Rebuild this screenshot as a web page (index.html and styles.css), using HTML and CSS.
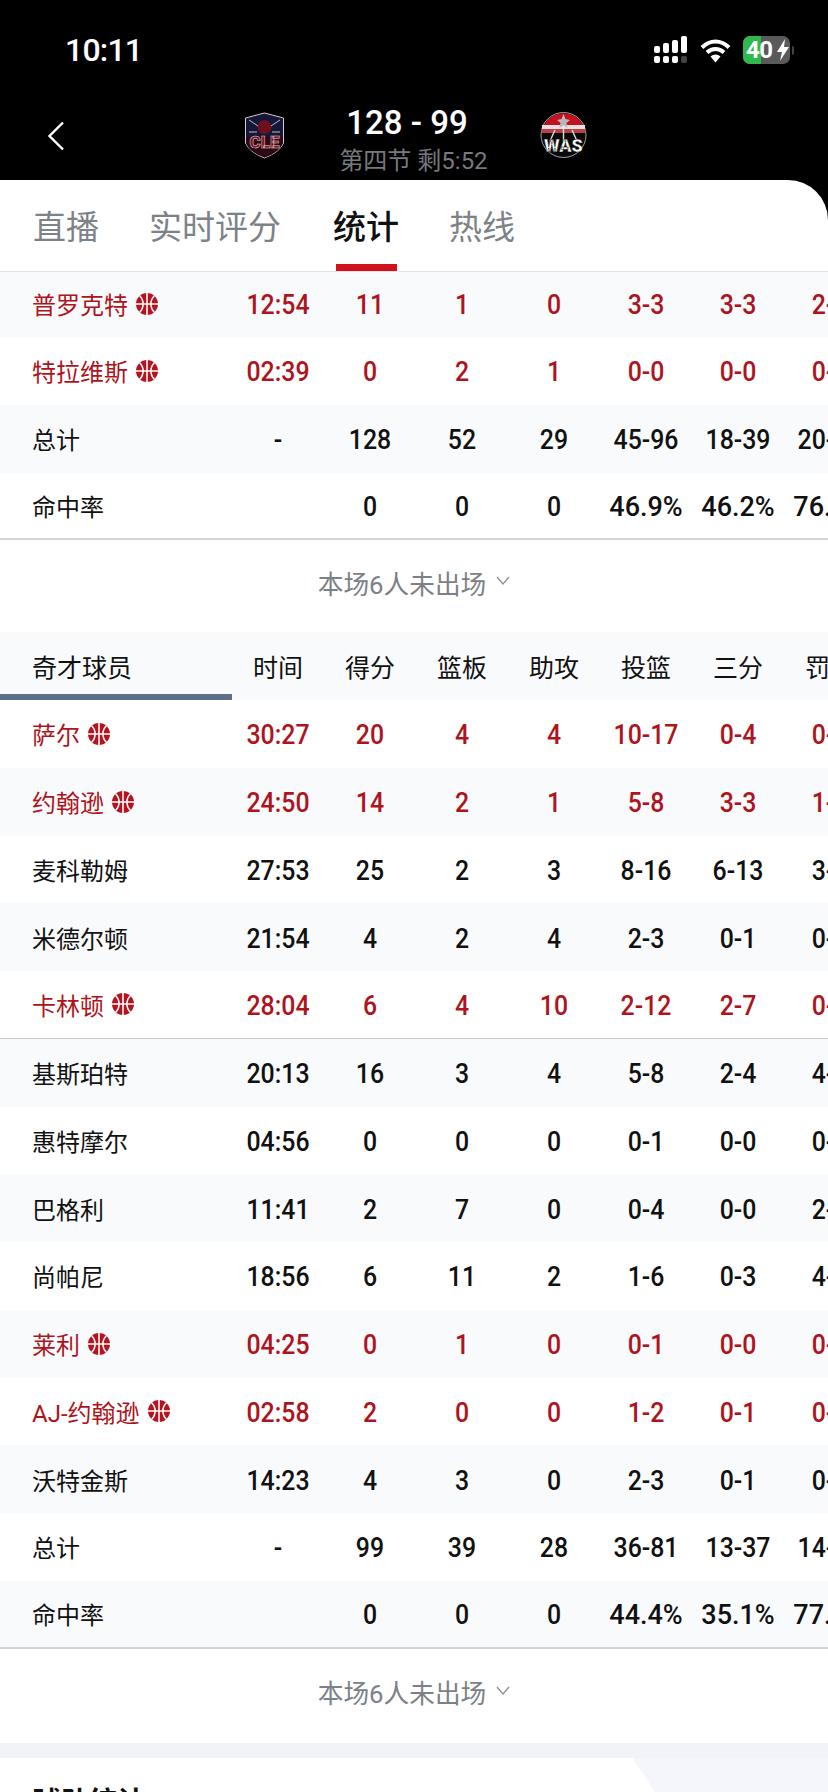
FILE: index.html
```html
<!DOCTYPE html>
<html lang="zh">
<head>
<meta charset="utf-8">
<title>比赛统计</title>
<link rel="stylesheet" href="styles.css">
</head>
<body>
<svg class="defs" width="0" height="0" aria-hidden="true">
  <symbol id="ball" viewBox="0 0 24 24">
    <circle cx="12" cy="12" r="12" fill="#b5141f"/>
    <path d="M12 0v24M0 12h24M4 3c5 5 5 13 0 18M20 3c-5 5-5 13 0 18" fill="none" stroke="#fff" stroke-width="1.7"/>
  </symbol>
</svg>
<div class="phone">
  <header class="top">
    <div class="status">
      <span class="clock">10:11</span>
      <div class="status-icons">
        <svg class="signal" width="34" height="28" viewBox="0 0 34 28">
          <g fill="#fff">
            <rect x="0" y="10" width="6" height="7" rx="2"/><rect x="9" y="7" width="6" height="10" rx="2"/><rect x="18" y="4" width="6" height="13" rx="2"/><rect x="27" y="0" width="6" height="17" rx="2"/>
            <rect x="0" y="20" width="6" height="7" rx="2"/><rect x="9" y="20" width="6" height="7" rx="2"/><rect x="18" y="20" width="6" height="7" rx="2"/>
          </g>
          <rect x="27" y="20" width="6" height="7" rx="2" fill="#444"/>
        </svg>
        <svg class="wifi" width="31" height="25" viewBox="0 0 31 25">
          <path d="M2 9.5C10 1.5 21 1.5 29 9.5M7 14.5C12 9.8 19 9.8 24 14.5" fill="none" stroke="#fff" stroke-width="4"/>
          <path d="M10.500 18.500C13.500 15.800 17.500 15.800 20.500 18.500L15.500 24.500Z" fill="#fff"/>
        </svg>
        <div class="battery">
          <span class="battery-fill"></span>
          <span class="battery-text">40</span>
          <svg class="bolt" width="14" height="22" viewBox="0 0 14 22"><path d="M9 0 1 13h5l-2 9 9-14H8z" fill="#fff"/></svg>
        </div>
        <span class="battery-nub"></span>
      </div>
    </div>
    <div class="match">
      <svg class="back" width="18" height="30" viewBox="0 0 18 30"><path d="M16 1.500 2.500 15 16 28.500" fill="none" stroke="#fff" stroke-width="2.400"/></svg>
      <svg class="logo-cle" width="41" height="47" viewBox="0 0 41 47">
        <path d="M20.500 1 39.500 6V31Q36 40 20.500 46 5 40 1.500 31V6Z" fill="#14163a" stroke="#d8c8c8" stroke-width="1"/>
        <path d="M2 25H39V31Q36 40 20.500 45.500 5 40 2 31Z" fill="#2c0a14"/>
        <circle cx="20.500" cy="15" r="7" fill="#6e0f1e"/>
        <path d="M5 8 14 14M36 8 27 14M5 20H13M28 20H36" stroke="#c9b8b0" stroke-width="1"/>
        <text class="logo-text-cle" x="20.500" y="36" text-anchor="middle">CLE</text>
      </svg>
      <div class="score-box">
        <div class="score">128 - 99</div>
        <div class="period">第四节 剩5:52</div>
      </div>
      <svg class="logo-was" width="47" height="48" viewBox="0 0 47 48">
        <circle cx="23.500" cy="24" r="22.500" fill="#0a0a0a" stroke="#c8c8c8" stroke-width=".8"/>
        <path d="M4 14A22 22 0 0 1 43 14Z" fill="#c4111f"/>
        <path d="M2 14H45V18H2Z" fill="#e8e0e0"/>
        <path d="M1.500 18H45.500V22H1.500Z" fill="#b8414c"/>
        <path d="M23.500 3 25.500 8 30 9 26.500 12 27.500 17 23.500 14 19.500 17 20.500 12 17 9 21.500 8Z" fill="#b8b8bc"/>
        <path d="M23.500 17V30M15 19 10 30M32 19 37 30" stroke="#ddd" stroke-width="1.400" fill="none"/>
        <text class="logo-text-was" x="23.500" y="41" text-anchor="middle">WAS</text>
      </svg>
    </div>
  </header>

  <main class="sheet">
    <nav class="tabs">
      <span class="tab">直播</span>
      <span class="tab">实时评分</span>
      <span class="tab tab-active">统计</span>
      <span class="tab">热线</span>
    </nav>

    <section class="table">
      <div class="row row-clipped tint hot"><div class="name">普罗克特<svg class="ball"><use href="#ball"/></svg></div><span>12:54</span><span>11</span><span>1</span><span>0</span><span>3-3</span><span>3-3</span><span>2-2</span></div>
      <div class="row hot"><div class="name">特拉维斯<svg class="ball"><use href="#ball"/></svg></div><span>02:39</span><span>0</span><span>2</span><span>1</span><span>0-0</span><span>0-0</span><span>0-0</span></div>
      <div class="row tint"><div class="name">总计</div><span>-</span><span>128</span><span>52</span><span>29</span><span>45-96</span><span>18-39</span><span>20-26</span></div>
      <div class="row row-end"><div class="name">命中率</div><span></span><span>0</span><span>0</span><span>0</span><span class="pct">46.9%</span><span class="pct">46.2%</span><span class="pct">76.9%</span></div>
    </section>
    <div class="more">本场6人未出场<svg class="chev" width="14" height="9" viewBox="0 0 14 9"><path d="M1 1 7 8 13 1" fill="none" stroke="#8a8e93" stroke-width="1.300"/></svg></div>

    <section class="table">
      <div class="row tint head"><div class="name name-head">奇才球员</div><span>时间</span><span>得分</span><span>篮板</span><span>助攻</span><span>投篮</span><span>三分</span><span>罚球</span></div>
      <div class="row hot"><div class="name">萨尔<svg class="ball"><use href="#ball"/></svg></div><span>30:27</span><span>20</span><span>4</span><span>4</span><span>10-17</span><span>0-4</span><span>0-0</span></div>
      <div class="row tint hot"><div class="name">约翰逊<svg class="ball"><use href="#ball"/></svg></div><span>24:50</span><span>14</span><span>2</span><span>1</span><span>5-8</span><span>3-3</span><span>1-1</span></div>
      <div class="row"><div class="name">麦科勒姆</div><span>27:53</span><span>25</span><span>2</span><span>3</span><span>8-16</span><span>6-13</span><span>3-3</span></div>
      <div class="row tint"><div class="name">米德尔顿</div><span>21:54</span><span>4</span><span>2</span><span>4</span><span>2-3</span><span>0-1</span><span>0-0</span></div>
      <div class="row hot row-starter"><div class="name">卡林顿<svg class="ball"><use href="#ball"/></svg></div><span>28:04</span><span>6</span><span>4</span><span>10</span><span>2-12</span><span>2-7</span><span>0-0</span></div>
      <div class="row tint"><div class="name">基斯珀特</div><span>20:13</span><span>16</span><span>3</span><span>4</span><span>5-8</span><span>2-4</span><span>4-4</span></div>
      <div class="row"><div class="name">惠特摩尔</div><span>04:56</span><span>0</span><span>0</span><span>0</span><span>0-1</span><span>0-0</span><span>0-0</span></div>
      <div class="row tint"><div class="name">巴格利</div><span>11:41</span><span>2</span><span>7</span><span>0</span><span>0-4</span><span>0-0</span><span>2-2</span></div>
      <div class="row"><div class="name">尚帕尼</div><span>18:56</span><span>6</span><span>11</span><span>2</span><span>1-6</span><span>0-3</span><span>4-4</span></div>
      <div class="row tint hot"><div class="name">莱利<svg class="ball"><use href="#ball"/></svg></div><span>04:25</span><span>0</span><span>1</span><span>0</span><span>0-1</span><span>0-0</span><span>0-0</span></div>
      <div class="row hot"><div class="name">AJ-约翰逊<svg class="ball"><use href="#ball"/></svg></div><span>02:58</span><span>2</span><span>0</span><span>0</span><span>1-2</span><span>0-1</span><span>0-0</span></div>
      <div class="row tint"><div class="name">沃特金斯</div><span>14:23</span><span>4</span><span>3</span><span>0</span><span>2-3</span><span>0-1</span><span>0-0</span></div>
      <div class="row"><div class="name">总计</div><span>-</span><span>99</span><span>39</span><span>28</span><span>36-81</span><span>13-37</span><span>14-18</span></div>
      <div class="row tint row-end"><div class="name">命中率</div><span></span><span>0</span><span>0</span><span>0</span><span class="pct">44.4%</span><span class="pct">35.1%</span><span class="pct">77.8%</span></div>
    </section>
    <div class="more more-last">本场6人未出场<svg class="chev" width="14" height="9" viewBox="0 0 14 9"><path d="M1 1 7 8 13 1" fill="none" stroke="#8a8e93" stroke-width="1.300"/></svg></div>

    <div class="band"></div>
    <div class="team-area">
      <h2 class="team-tab">球队统计</h2>
    </div>
  </main>
</div>
</body>
</html>
```

FILE: styles.css
```css
* { box-sizing: border-box; }
html, body { margin: 0; padding: 0; height: 1792px; overflow: hidden; }
body { font-family: Roboto, "Noto Sans CJK SC", sans-serif; background: #000; }
.defs { position: absolute; }
.phone { width: 828px; height: 1792px; overflow: hidden; background: #000; }

.top { height: 180px; color: #fff; }
.status { height: 100px; padding: 34px 34px 0 65px; display: flex; justify-content: space-between; align-items: flex-start; }
.clock { font-size: 32px; font-weight: 500; line-height: 32px; letter-spacing: -0.8px; }
.status-icons { display: flex; align-items: center; height: 30px; margin-top: 1px; }
.signal { margin-right: 12px; }
.wifi { margin-right: 12px; }
.battery { position: relative; width: 47px; height: 28px; border-radius: 7px; background: #5a5a5c; overflow: hidden; display: flex; align-items: center; padding-left: 3px; }
.battery-fill { position: absolute; left: 0; top: 0; bottom: 0; width: 18px; background: #2fb84c; }
.battery-text { position: relative; font-size: 24px; font-weight: 700; color: #fff; line-height: 28px; letter-spacing: -0.5px; }
.bolt { position: relative; margin-left: 3px; flex: none; }
.battery-nub { width: 2px; height: 9px; margin-left: 2px; background: #444; border-radius: 0 2px 2px 0; }

.match { height: 80px; display: grid; grid-template-columns: 244px 41px 255px 47px; align-items: center; position: relative; }
.back { margin-left: 47px; margin-top: -8px; }
.logo-cle { margin-top: -10px; }
.logo-was { margin-top: -10px; }
.logo-text-cle { font-family: Roboto, sans-serif; font-weight: 900; font-size: 17px; fill: #7a1222; stroke: #e2d2d2; stroke-width: .5px; }
.logo-text-was { font-family: Roboto, sans-serif; font-weight: 900; font-size: 18px; fill: #fff; stroke: #000; stroke-width: .4px; }
.score-box { text-align: center; margin-top: 0; padding-left: 2px; }
.score { font-size: 33px; font-weight: 500; line-height: 38px; margin-right: 13px; }
.period { font-size: 24px; line-height: 30px; color: #77797e; margin-top: 4px; }

.sheet { background: #fff; border-radius: 0 40px 0 0; height: 1612px; overflow: hidden; }
.tabs { height: 92px; display: flex; gap: 50px; padding-left: 33px; border-bottom: 1px solid #e4e4e6; }
.tab { position: relative; font-size: 33px; line-height: 96px; color: #7d8287; }
.tab-active { color: #111; font-weight: 500; margin-left: 2px; line-height: 96px; height: 91px; }
.tab-active::after { content: ""; position: absolute; left: 3px; right: 2px; bottom: 0; height: 7px; background: #d0121b; }

.table { width: 828px; overflow: hidden; }
.row { display: grid; grid-template-columns: 232px repeat(7, 92px); height: 67.750px; align-items: center; text-align: center; font-size: 27px; font-weight: 500; color: #111; }
.row > span { padding-top: 3px; transform: scaleX(.92); }
.row > .pct { transform: none; }
.row-clipped { height: 65px; padding-bottom: 2px; }
.tint { background: #f9fafc; }
.hot { color: #ae1420; }
.name { display: flex; align-items: center; gap: 8px; padding-left: 32px; font-size: 24px; font-weight: 400; text-align: left; height: 100%; }
.ball { width: 22px; height: 22px; flex: none; }
.row-end { border-bottom: 2px solid #d4d4d6; }
.row-starter { border-bottom: 1px solid #c9c9cc; }
.head { font-size: 25px; font-weight: 400; }
.row.head > span { transform: none; padding-top: 0; }
.name-head { border-bottom: 6px solid #5f6f8a; padding-top: 6px; font-size: 25px; }

.more { height: 92px; display: flex; align-items: center; justify-content: center; gap: 10px; padding-bottom: 8px; font-size: 25.700px; color: #7c8187; }
.more-last { height: 94px; }
.chev { margin-top: -3px; }
.band { height: 15px; background: #f2f3f8; }
.team-area { height: 60px; background: #f5f6fb; }
.team-tab { margin: 0; width: 672px; height: 60px; padding: 25px 0 0 33px; background: #fff; font-size: 28px; line-height: 40px; font-weight: 700; color: #111; clip-path: polygon(0 0, 632px 0, 100% 100%, 0 100%); }
```
